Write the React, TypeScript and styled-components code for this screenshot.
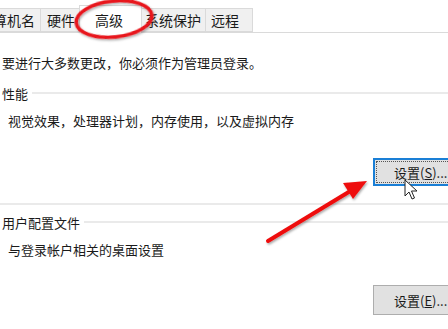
import styled, { createGlobalStyle } from 'styled-components'

const GlobalStyle = createGlobalStyle`
  html, body {
    margin: 0;
    padding: 0;
    background: #ffffff;
    overflow: hidden;
  }
  body {
    font-family: 'Noto Sans CJK SC', 'Noto Sans', sans-serif;
    font-size: 13px;
    color: #1a1a1a;
  }
`

const Page = styled.div`
  position: relative;
  width: 448px;
  height: 329px;
  overflow: hidden;
  background: #ffffff;
`

const TabBar = styled.div`
  display: flex;
  align-items: flex-end;
  height: 33px;
  border-bottom: 1px solid #dadada;
  box-sizing: border-box;
  margin-left: -28px;
`

const Tab = styled.div<{ $active?: boolean; $w: number; $pl: number }>`
  display: flex;
  align-items: center;
  box-sizing: border-box;
  flex-shrink: 0;
  width: ${(p) => p.$w}px;
  height: ${(p) => (p.$active ? 28 : 24)}px;
  padding-left: ${(p) => p.$pl}px;
  margin-bottom: ${(p) => (p.$active ? -1 : 0)}px;
  margin-right: -1px;
  background: ${(p) => (p.$active ? '#ffffff' : '#f0f0f0')};
  border: 1px solid #dadada;
  border-bottom: ${(p) => (p.$active ? 'none' : '1px solid #dadada')};
  font-size: 14px;
  color: #1a1a1a;
  white-space: nowrap;
`

const Content = styled.div`
  display: flex;
  flex-direction: column;
  padding: 21px 0 0 2px;
`

const Intro = styled.div`
  line-height: 18px;
  height: 18px;
`

const Group = styled.div<{ $closed?: boolean }>`
  display: flex;
  flex-direction: column;
  margin-left: -2px;
  padding-left: 2px;
  border-bottom: ${(p) => (p.$closed ? '2px solid #eaeaea' : 'none')};
`

const GroupHead = styled.div`
  display: flex;
  align-items: center;
  height: 18px;
  gap: 4px;
`

const GroupLine = styled.div`
  flex: 1;
  height: 2px;
  background: #eaeaea;
`

const Desc = styled.div`
  line-height: 18px;
  padding-left: 6px;
`

const ButtonRow = styled.div<{ $top: number; $bottom: number }>`
  display: flex;
  padding: ${(p) => p.$top}px 0 ${(p) => p.$bottom}px 371px;
`

const Button = styled.div<{ $focused?: boolean }>`
  display: flex;
  align-items: center;
  box-sizing: border-box;
  flex-shrink: 0;
  width: 96px;
  height: ${(p) => (p.$focused ? 28 : 30)}px;
  padding-left: ${(p) => (p.$focused ? 19 : 20)}px;
  background: #e1e1e1;
  border: ${(p) => (p.$focused ? '2px solid #1a7fd6' : '1px solid #adadad')};
  outline: ${(p) => (p.$focused ? '1px dotted #555' : 'none')};
  outline-offset: -4px;
  color: #1a1a1a;
  white-space: nowrap;
`

const Overlay = styled.svg`
  position: absolute;
  left: 0;
  top: 0;
  pointer-events: none;
`

const App = () => {
  return (
    <>
      <GlobalStyle />
      <Page>
        <TabBar>
          <Tab $w={69} $pl={6}>计算机名</Tab>
          <Tab $w={40} $pl={6}>硬件</Tab>
          <Tab $active $w={63} $pl={15}>高级</Tab>
          <Tab $w={65} $pl={3}>系统保护</Tab>
          <Tab $w={48} $pl={5}>远程</Tab>
        </TabBar>
        <Content>
          <Intro>要进行大多数更改，你必须作为管理员登录。</Intro>
          <Group $closed style={{ marginTop: 12 }}>
            <GroupHead>
              <span>性能</span>
              <GroupLine />
            </GroupHead>
            <Desc style={{ marginTop: 10 }}>视觉效果，处理器计划，内存使用，以及虚拟内存</Desc>
            <ButtonRow $top={28} $bottom={17}>
              <Button $focused>
                设置(<u>S</u>)...
              </Button>
            </ButtonRow>
          </Group>
          <Group style={{ marginTop: 8 }}>
            <GroupHead>
              <span>用户配置文件</span>
              <GroupLine />
            </GroupHead>
            <Desc style={{ marginTop: 10 }}>与登录帐户相关的桌面设置</Desc>
            <ButtonRow $top={26} $bottom={0}>
              <Button>
                设置(<u>E</u>)...
              </Button>
            </ButtonRow>
          </Group>
        </Content>

        <Overlay width="448" height="329" viewBox="0 0 448 329">
          <defs>
            <filter id="sh" x="-20%" y="-20%" width="140%" height="140%">
              <feDropShadow dx="1" dy="1.5" stdDeviation="1" floodColor="#000" floodOpacity="0.35" />
            </filter>
          </defs>
          <ellipse
            cx="114"
            cy="19"
            rx="38"
            ry="18"
            transform="rotate(-6 114 19)"
            fill="none"
            stroke="#e8121a"
            strokeWidth="3.5"
            filter="url(#sh)"
          />
          <g filter="url(#sh)">
            <line x1="268" y1="241" x2="352" y2="190" stroke="#ee1111" strokeWidth="4" strokeLinecap="round" />
            <polygon points="367,181 343,183 353,199" fill="#ee1111" />
          </g>
          <path
            d="M405 180 L405 196 L409 192 L412 199 L414.5 198 L411.5 191 L417 191 Z"
            fill="#ffffff"
            stroke="#222"
            strokeWidth="1"
            strokeLinejoin="round"
          />
        </Overlay>
      </Page>
    </>
  )
}

export default App
